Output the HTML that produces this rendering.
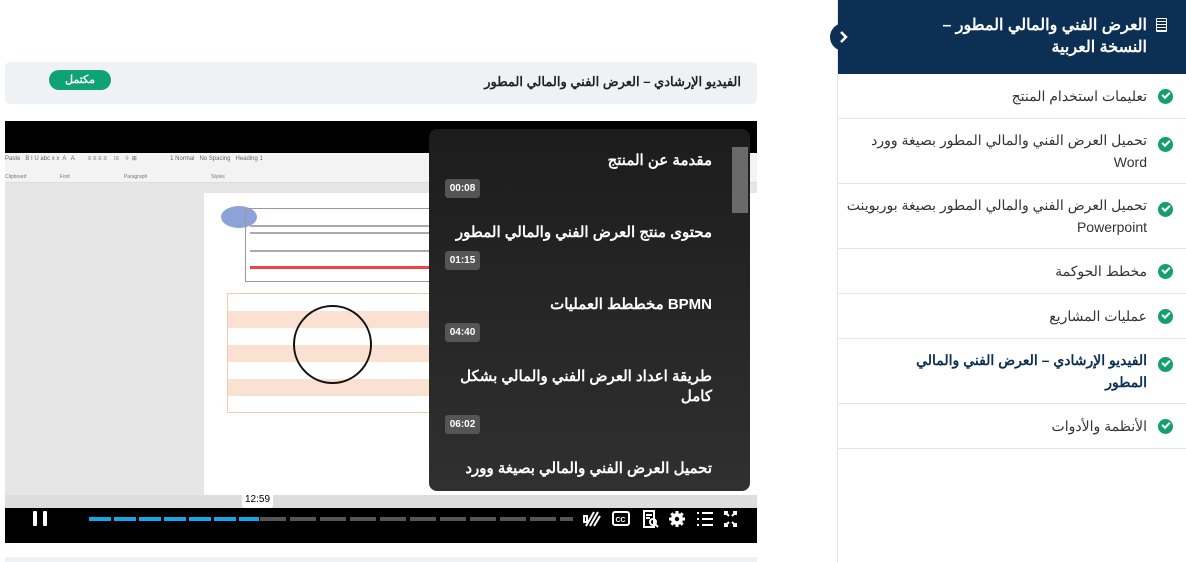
<!DOCTYPE html>
<html><head><meta charset="utf-8"><style>
*{box-sizing:border-box;margin:0;padding:0}
body{width:1186px;height:562px;background:#fff;font-family:"Liberation Sans","Noto Sans CJK SC",sans-serif;position:relative;overflow:hidden;color:#222}
.abs{position:absolute}
.side{left:837px;top:0;width:349px;height:562px;border-left:1px solid #e3e6ea}
.shead{left:0;top:0;width:349px;height:74px;background:#0c2f54;color:#fff;direction:rtl;padding:15px 40px 0 75px;font-size:16px;font-weight:bold;line-height:22px}
.item{left:0;width:349px;border-bottom:1px solid #e3e6ea;direction:rtl;padding:0 40px 0 6px;font-size:14px;color:#333;line-height:22px;display:flex;align-items:center}
.chk{position:absolute;right:14px;width:15px;height:15px;border-radius:50%;background:#15a06b}
.chk:after{content:"";position:absolute;left:4px;top:3px;width:6px;height:3px;border-left:2px solid #fff;border-bottom:2px solid #fff;transform:rotate(-45deg)}
.ol{left:429px;top:129px;width:321px;height:362px;background:linear-gradient(#1c1c1c,#303030);border-radius:8px;direction:rtl;color:#fff;overflow:hidden}
.ch{position:absolute;right:38px;font-size:15px;font-weight:bold;width:275px;text-align:right;line-height:20px}
.tm{position:absolute;right:270px;width:35px;height:19px;background:#555;border-radius:3px;font-size:10px;font-weight:bold;text-align:center;line-height:19px;direction:ltr}
</style></head><body>
<div class="abs" style="left:5px;top:62px;width:752px;height:42px;background:#eff2f5;border-radius:5px"></div>
<div class="abs" style="left:0;top:74px;width:741px;text-align:right;direction:rtl;font-size:13px;font-weight:bold;color:#222">الفيديو الإرشادي – العرض الفني والمالي المطور</div>
<div class="abs" style="left:49px;top:70px;width:62px;height:20px;background:#0ea274;border-radius:10px;color:#fff;font-size:11px;font-weight:bold;text-align:center;line-height:20px">مكتمل</div>

<div class="abs" style="left:5px;top:121px;width:752px;height:422px;background:#000"></div>
<div class="abs" style="left:5px;top:153px;width:752px;height:345px;background:#e6e6e6"></div>
<div class="abs" style="left:5px;top:153px;width:752px;height:30px;background:#f3f3f3;border-bottom:1px solid #ddd"></div>
<div class="abs" style="left:5px;top:155px;font-size:6px;color:#666;white-space:pre">Paste   B I U abc x x  A   A        ≡ ≡ ≡ ≡    ⁝≡    ◊  ⊞                    1 Normal   No Spacing   Heading 1</div>
<div class="abs" style="left:5px;top:174px;font-size:5px;color:#777;white-space:pre">Clipboard                        Font                                       Paragraph                                              Styles</div>
<div class="abs" style="left:204px;top:193px;width:553px;height:302px;background:#fff"></div>
<div class="abs" style="left:221px;top:206px;width:36px;height:22px;border-radius:50%;background:#8da2d8"></div>
<div class="abs" style="left:245px;top:208px;width:190px;height:74px;border:1px solid #999"></div>
<div class="abs" style="left:250px;top:266px;width:180px;height:3px;background:#e44"></div>
<div class="abs" style="left:250px;top:225px;width:180px;height:2px;background:#aaa"></div>
<div class="abs" style="left:250px;top:232px;width:180px;height:2px;background:#aaa"></div>
<div class="abs" style="left:250px;top:250px;width:180px;height:2px;background:#aaa"></div>
<div class="abs" style="left:227px;top:293px;width:210px;height:120px;background:repeating-linear-gradient(#fff 0 17px,#fbe1d2 17px 34px);border:1px solid #f5c9b0"></div>
<div class="abs" style="left:293px;top:305px;width:79px;height:79px;border:2px solid #111;border-radius:50%"></div>
<div class="abs" style="left:5px;top:495px;width:752px;height:13px;background:#ddd"></div>

<div class="abs" style="left:33px;top:511px;width:4px;height:15px;background:#fff;border-radius:1px"></div>
<div class="abs" style="left:43px;top:511px;width:4px;height:15px;background:#fff;border-radius:1px"></div>
<div class="abs" style="left:89px;top:517px;width:170px;height:4px;background:repeating-linear-gradient(90deg,#16a6e8 0 22px,transparent 22px 25px)"></div>
<div class="abs" style="left:260px;top:517px;width:313px;height:4px;background:repeating-linear-gradient(90deg,#555 0 26px,transparent 26px 30px)"></div>
<div class="abs" style="left:242px;top:492px;width:31px;height:16px;background:#fff;border-radius:3px;font-size:10px;text-align:center;line-height:16px;color:#000">12:59</div>
<svg class="abs" style="left:580px;top:508px" width="166" height="22" viewBox="0 0 166 22" fill="none" stroke="#fff" stroke-width="2">
<path d="M6 18L14 4M10 18L18 4M14 18L20 8M4 8h3v6H4z" />
<rect x="33" y="4" width="16" height="13" rx="2"/><text x="35.5" y="14" font-size="7" fill="#fff" stroke="none" font-family="Liberation Sans" font-weight="bold">CC</text>
<path d="M64 3h10v16H64zM66 7h6M66 10h4"/><circle cx="73" cy="14" r="3"/><path d="M75 16l3 3"/>
<g stroke="none" fill="#fff"><circle cx="97" cy="11" r="6"/>
<rect x="95.5" y="3" width="3" height="16"/><rect x="89" y="9.5" width="16" height="3"/>
<rect x="95.5" y="3" width="3" height="16" transform="rotate(45 97 11)"/><rect x="95.5" y="3" width="3" height="16" transform="rotate(-45 97 11)"/>
<circle cx="97" cy="11" r="2.2" fill="#000"/></g>
<path d="M117 5h2M117 11h2M117 17h2M122 5h11M122 11h11M122 17h11"/>
<path d="M145 7V4h3M153 4h3v3M145 15v3h3M153 18h3v-3M146 5l3 3M155 5l-3 3M146 17l3-3M155 17l-3-3"/>
</svg>

<div class="abs ol">
<div class="abs" style="left:303px;top:18px;width:16px;height:66px;background:#6a6a6a"></div>
<div class="ch" style="top:22px">مقدمة عن المنتج</div><div class="tm" style="top:50px">00:08</div>
<div class="ch" style="top:94px">محتوى منتج العرض الفني والمالي المطور</div><div class="tm" style="top:122px">01:15</div>
<div class="ch" style="top:166px">BPMN مخططط العمليات</div><div class="tm" style="top:194px">04:40</div>
<div class="ch" style="top:238px">طريقة اعداد العرض الفني والمالي بشكل كامل</div><div class="tm" style="top:286px">06:02</div>
<div class="ch" style="top:330px">تحميل العرض الفني والمالي بصيغة وورد</div>
</div>
<div class="abs" style="left:5px;top:557px;width:752px;height:5px;background:#eff2f5"></div>

<div class="abs side">
<div class="abs shead">العرض الفني والمالي المطور – النسخة العربية<span class="abs" style="right:20px;top:18px;width:11px;height:14px;border:1.5px solid #fff;border-radius:1px;background:repeating-linear-gradient(#0c2f54 0 2px,#fff 2px 3px)"></span></div>
<div class="abs" style="left:-8px;top:23px;width:28px;height:28px;border-radius:50%;background:#0c2f54"><svg width="28" height="28"><path d="M11 9l5 5-5 5" stroke="#fff" stroke-width="2.5" fill="none"/></svg></div>
<div class="abs item" style="top:74px;height:45px"><span class="chk"></span>تعليمات استخدام المنتج</div>
<div class="abs item" style="top:119px;height:65px"><span class="chk" style="top:18px"></span>تحميل العرض الفني والمالي المطور بصيغة وورد Word</div>
<div class="abs item" style="top:184px;height:65px"><span class="chk" style="top:18px"></span>تحميل العرض الفني والمالي المطور بصيغة بوربوينت Powerpoint</div>
<div class="abs item" style="top:249px;height:45px"><span class="chk"></span>مخطط الحوكمة</div>
<div class="abs item" style="top:294px;height:45px"><span class="chk"></span>عمليات المشاريع</div>
<div class="abs item" style="top:339px;height:65px;font-weight:bold;color:#0c2f54;padding-left:40px"><span class="chk" style="top:18px"></span>الفيديو الإرشادي – العرض الفني والمالي المطور</div>
<div class="abs item" style="top:404px;height:45px"><span class="chk"></span>الأنظمة والأدوات</div>
</div>
</body></html>
